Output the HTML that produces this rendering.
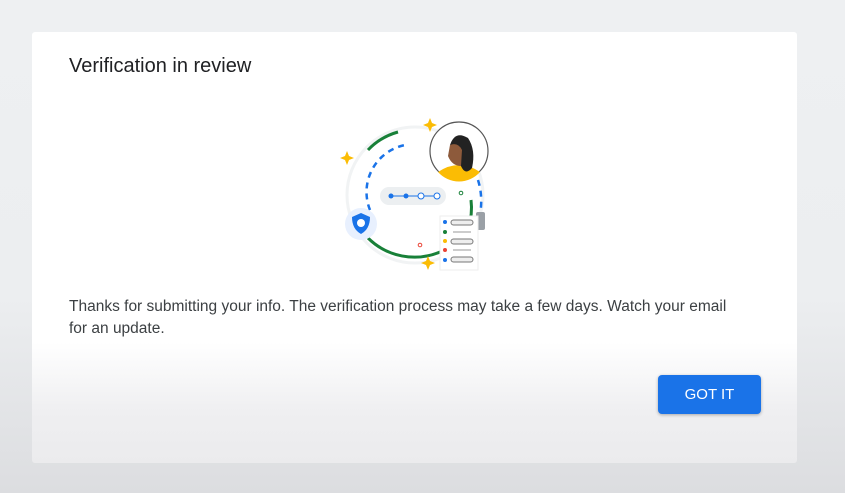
<!DOCTYPE html>
<html><head><style>
html,body{margin:0;padding:0}
body{width:845px;height:493px;overflow:hidden;background:linear-gradient(#eef0f2 0%,#eceef0 60%,#dcdde0 100%);font-family:"Liberation Sans",sans-serif;position:relative}
.card{position:absolute;left:32px;top:32px;width:765px;height:431px;background:linear-gradient(#ffffff 0%,#ffffff 72%,#efeff1 88%,#ebebed 100%);border-radius:3px}
h1{position:absolute;left:37px;top:23px;margin:0;font-size:20px;font-weight:400;color:#202124}
p{position:absolute;left:37px;top:264px;margin:0;width:660px;font-size:15.5px;line-height:22px;color:#3c4043}
.btn{position:absolute;left:626px;top:343px;width:103px;height:39px;background:#1a73e8;color:#fff;border-radius:4px;font-size:15px;text-align:center;line-height:39px;box-shadow:0 1px 3px rgba(0,0,0,.3)}
svg{position:absolute;left:298px;top:78px}
</style></head><body>
<div class="card">
<h1>Verification in review</h1>
<svg width="180" height="170" viewBox="330 110 180 170">
<circle cx="415" cy="195" r="68" fill="none" stroke="#f1f3f4" stroke-width="3"/>
<path d="M368 150 A66 66 0 0 1 398 132" fill="none" stroke="#188038" stroke-width="3"/>
<path d="M368 238 A66 66 0 0 0 440 252" fill="none" stroke="#188038" stroke-width="3"/>
<path d="M471 200 A60 60 0 0 1 468 228" fill="none" stroke="#188038" stroke-width="3"/>
<path d="M370 210 A48 48 0 0 1 405 145" fill="none" stroke="#1a73e8" stroke-width="2.5" stroke-dasharray="6 5"/>
<path d="M478 180 A70 70 0 0 1 478 222" fill="none" stroke="#1a73e8" stroke-width="2.5" stroke-dasharray="6 5"/>
<rect x="380" y="187" width="66" height="18" rx="9" fill="#eceff1"/>
<line x1="391" y1="196" x2="437" y2="196" stroke="#1a73e8" stroke-width="1"/>
<circle cx="391" cy="196" r="2.5" fill="#1a73e8"/><circle cx="406" cy="196" r="2.5" fill="#1a73e8"/>
<circle cx="421" cy="196" r="3" fill="#fff" stroke="#1a73e8"/><circle cx="437" cy="196" r="3" fill="#fff" stroke="#1a73e8"/>
<circle cx="459" cy="151" r="29" fill="#fff" stroke="#555" stroke-width="1.2"/>
<path d="M438 172 Q459 158 480 172 A28 28 0 0 1 438 172Z" fill="#fbbc04"/>
<path d="M450 145 Q455 130 468 138 Q476 150 472 168 Q466 175 462 168 Z" fill="#222"/>
<path d="M450 145 Q458 142 462 150 L461 166 Q452 166 448 156Z" fill="#8d5a3b"/>
<circle cx="361" cy="224" r="16" fill="#e8f0fe"/>
<path d="M361 213 L370 217 Q370 229 361 234 Q352 229 352 217Z" fill="#1a73e8"/>
<circle cx="361" cy="223" r="4" fill="#fff"/>
<rect x="476" y="212" width="9" height="18" rx="2" fill="#9aa0a6"/>
<rect x="440" y="216" width="38" height="54" fill="#fff" stroke="#eee"/>
<g stroke="#777" stroke-width="1" fill="#eee">
<rect x="451" y="220" width="22" height="5" rx="2.5"/><rect x="451" y="239" width="22" height="5" rx="2.5"/><rect x="451" y="257" width="22" height="5" rx="2.5"/></g>
<line x1="453" y1="232" x2="471" y2="232" stroke="#999"/><line x1="453" y1="250" x2="471" y2="250" stroke="#999"/>
<circle cx="445" cy="222" r="2" fill="#1a73e8"/><circle cx="445" cy="232" r="2" fill="#188038"/><circle cx="445" cy="241" r="2" fill="#fbbc04"/><circle cx="445" cy="250" r="2" fill="#ea4335"/><circle cx="445" cy="260" r="2" fill="#1a73e8"/>
<circle cx="420" cy="245" r="1.8" fill="none" stroke="#ea4335"/>
<circle cx="461" cy="193" r="1.8" fill="none" stroke="#188038"/>
<g fill="#fbbc04"><path d="M430 118 l2 5 5 2 -5 2 -2 5 -2 -5 -5 -2 5 -2z"/><path d="M347 151 l2 5 5 2 -5 2 -2 5 -2 -5 -5 -2 5 -2z"/><path d="M428 256 l2 5 5 2 -5 2 -2 5 -2 -5 -5 -2 5 -2z"/></g>
</svg>
<p>Thanks for submitting your info. The verification process may take a few days. Watch your email for an update.</p>
<div class="btn">GOT IT</div>
</div>
</body></html>
